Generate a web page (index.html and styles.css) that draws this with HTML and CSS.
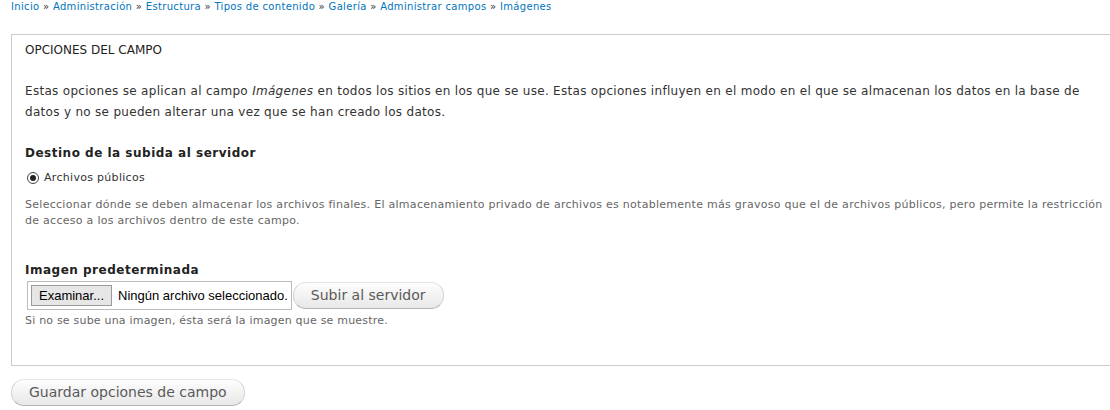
FILE: index.html
```html
<!DOCTYPE html>
<html lang="es">
<head>
<meta charset="utf-8">
<link rel="stylesheet" href="styles.css">
</head>
<body>
<div class="breadcrumb"><a href="#">Inicio</a> » <a href="#">Administración</a> » <a href="#">Estructura</a> » <a href="#">Tipos de contenido</a> » <a href="#">Galería</a> » <a href="#">Administrar campos</a> » <a href="#">Imágenes</a></div>
<form class="form">
  <fieldset class="fieldset">
    <div class="legend">OPCIONES DEL CAMPO</div>
    <p class="intro">Estas opciones se aplican al campo <em>Imágenes</em> en todos los sitios en los que se use. Estas opciones influyen en el modo en el que se almacenan los datos en la base de datos y no se pueden alterar una vez que se han creado los datos.</p>
    <div class="item item-dest">
      <div class="label">Destino de la subida al servidor</div>
      <label class="radio"><span class="radio-dot"></span>Archivos públicos</label>
      <div class="desc">Seleccionar dónde se deben almacenar los archivos finales. El almacenamiento privado de archivos es notablemente más gravoso que el de archivos públicos, pero permite la restricción de acceso a los archivos dentro de este campo.</div>
    </div>
    <div class="item item-img">
      <div class="label">Imagen predeterminada</div>
      <div class="upload">
        <div class="file"><span class="browse">Examinar...</span><span class="nofile">Ningún archivo seleccionado.</span></div>
        <span class="btn btn-upload">Subir al servidor</span>
      </div>
      <div class="desc">Si no se sube una imagen, ésta será la imagen que se muestre.</div>
    </div>
  </fieldset>
  <div class="actions"><span class="btn btn-save">Guardar opciones de campo</span></div>
</form>
</body>
</html>
```
FILE: styles.css
```css
html, body { margin: 0; padding: 0; background: #fff; }
body {
  font-family: "DejaVu Sans", Verdana, sans-serif;
  color: #333;
  width: 1110px;
  height: 410px;
  overflow: hidden;
}
.breadcrumb {
  padding: 0 0 0 11px;
  font-size: 10px;
  line-height: 13px;
  letter-spacing: 0.33px;
  color: #333;
}
.breadcrumb a { color: #0074bd; text-decoration: none; }
.form { padding-left: 11px; }
.fieldset {
  margin: 21px -20px 0 0;
  padding: 0 14px 0 13px;
  border: 1px solid #ccc;
  height: 332px;
  box-sizing: border-box;
  min-width: 0;
}
.legend {
  font-size: 12px;
  line-height: 14px;
  color: #222;
  padding-top: 8px;
}
.intro {
  margin: 24px 0 0;
  font-size: 12px;
  line-height: 21px;
  letter-spacing: 0.3px;
  width: 1070px;
}
.intro em { font-style: italic; }
.label {
  font-size: 12px;
  font-weight: bold;
  line-height: 16px;
  letter-spacing: 0.5px;
  color: #222;
}
.item-dest { margin-top: 22px; }
.radio {
  display: flex;
  align-items: center;
  gap: 5px;
  margin-top: 10px;
  font-size: 11px;
  line-height: 14px;
  letter-spacing: 0.3px;
  padding-left: 2px;
}
.radio-dot {
  width: 12px; height: 12px;
  box-sizing: border-box;
  border: 1px solid #444;
  border-radius: 50%;
  display: inline-flex;
  align-items: center;
  justify-content: center;
  background: #fff;
}
.radio-dot::after {
  content: "";
  width: 6px; height: 6px;
  border-radius: 50%;
  background: #222;
}
.desc {
  font-size: 11px;
  line-height: 16px;
  color: #666;
  letter-spacing: 0.28px;
  margin-top: 12px;
  width: 1082px;
}
.item-img { margin-top: 33px; }
.upload {
  display: flex;
  align-items: center;
  margin-top: 3px;
  padding-left: 2px;
}
.file {
  display: flex;
  align-items: center;
  height: 29px;
  box-sizing: border-box;
  border: 1px solid #bbb;
  padding: 0 3px;
  font-family: "Liberation Sans", Arial, sans-serif;
  font-size: 13px;
  color: #000;
}
.browse {
  height: 21px;
  box-sizing: border-box;
  border: 1px solid #9a9a9a;
  background: #e6e6e6;
  padding: 0 7px;
  line-height: 19px;
}
.nofile { padding-left: 6px; }
.btn {
  display: inline-block;
  box-sizing: border-box;
  border: 1px solid #e4e4e4;
  border-bottom-color: #b4b4b4;
  border-left-color: #d2d2d2;
  border-right-color: #d2d2d2;
  border-radius: 13px;
  background: linear-gradient(#fdfdfd, #e8e8e8);
  color: #5a5a5a;
  font-size: 14px;
  height: 27px;
  line-height: 25px;
  padding: 0 17px;
}
.btn-upload { margin-left: 1px; }
.item-img .desc { margin-top: 3px; letter-spacing: 0.2px; }
.actions { margin-top: 13px; }
```
